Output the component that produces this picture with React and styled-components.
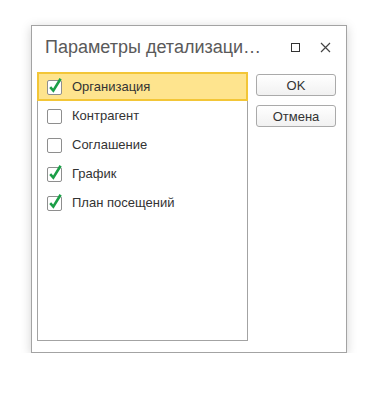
import styled, { createGlobalStyle } from "styled-components";

const Global = createGlobalStyle`
  body {
    margin: 0;
    background: #ffffff;
    font-family: Arial, "Liberation Sans", sans-serif;
  }
`;

const items = [
  { id: 1, name: "Организация", checked: true },
  { id: 2, name: "Контрагент", checked: false },
  { id: 3, name: "Соглашение", checked: false },
  { id: 4, name: "График", checked: true },
  { id: 5, name: "План посещений", checked: true },
];

function Check({ checked }) {
  return (
    <svg width="17" height="17" viewBox="0 -2 17 17">
      <rect x="0.5" y="0.5" width="14" height="14" rx="1.5" fill="#fff" stroke="#8e8e8e" />
      {checked && (
        <path d="M3.2 7.2 L6.3 10.6 L13.6 -1.2" fill="none" stroke="#1b9e47" strokeWidth="2.6" />
      )}
    </svg>
  );
}

export default function App() {
  return (
    <Pagina>
      <Global />
      <Janela>
        <Cabecalho>
          <Titulo>Параметры детализаци…</Titulo>
          <Icones>
            <Quadrado />
            <svg width="11" height="11" viewBox="0 0 11 11">
              <path d="M1 1 L10 10 M10 1 L1 10" stroke="#444" strokeWidth="1.2" />
            </svg>
          </Icones>
        </Cabecalho>
        <Corpo>
          <Lista>
            {items.map((i, idx) => (
              <Linha key={i.id} $ativo={idx === 0}>
                <Check checked={i.checked} />
                <span>{i.name}</span>
              </Linha>
            ))}
          </Lista>
          <Botoes>
            <Botao>OK</Botao>
            <Botao>Отмена</Botao>
          </Botoes>
        </Corpo>
      </Janela>
    </Pagina>
  );
}

const Pagina = styled.div`
padding: 25px 0 0 31px;
`;
const Janela = styled.div`
box-sizing: border-box;
width: 316px;
height: 328px;
border: 1px solid #a3a3a3;
background: #fff;
box-shadow: 0 2px 10px rgba(0, 0, 0, 0.18);
display: flex;
flex-direction: column;
`;
const Cabecalho = styled.div`
height: 46px;
display: flex;
align-items: flex-start;
padding: 10px 15px 0 13px;
box-sizing: border-box;
`;
const Titulo = styled.div`
flex: 1;
font-size: 18px;
line-height: 22px;
color: #5a5a5a;
white-space: nowrap;
`;
const Icones = styled.div`
display: flex;
align-items: center;
gap: 20px;
height: 22px;
`;
const Quadrado = styled.div`
width: 7px;
height: 7px;
border: 1px solid #333;
`;
const Corpo = styled.div`
flex: 1;
display: flex;
padding: 0 10px 11px 5px;
gap: 8px;
`;
const Lista = styled.div`
box-sizing: border-box;
width: 211px;
border: 1px solid #a3a3a3;
`;
const Linha = styled.div`
box-sizing: border-box;
height: 29px;
margin: ${(p) => (p.$ativo ? "-1px -1px 0 -1px" : "0")};
display: flex;
align-items: center;
gap: 8px;
padding-left: ${(p) => (p.$ativo ? "8px" : "9px")};
background: ${(p) => (p.$ativo ? "#fee48e" : "transparent")};
border: ${(p) => (p.$ativo ? "2px solid #f3c637" : "none")};
font-size: 13px;
color: #333;
svg { flex-shrink: 0; }
`;
const Botoes = styled.div`
display: flex;
flex-direction: column;
gap: 9px;
padding-top: 2px;
`;
const Botao = styled.button`
width: 80px;
height: 22px;
border: 1px solid #aaa;
border-radius: 3px;
background: linear-gradient(#ffffff, #f1f1f1);
font-family: Arial, "Liberation Sans", sans-serif;
font-size: 13px;
color: #333;
padding: 0;
`;
